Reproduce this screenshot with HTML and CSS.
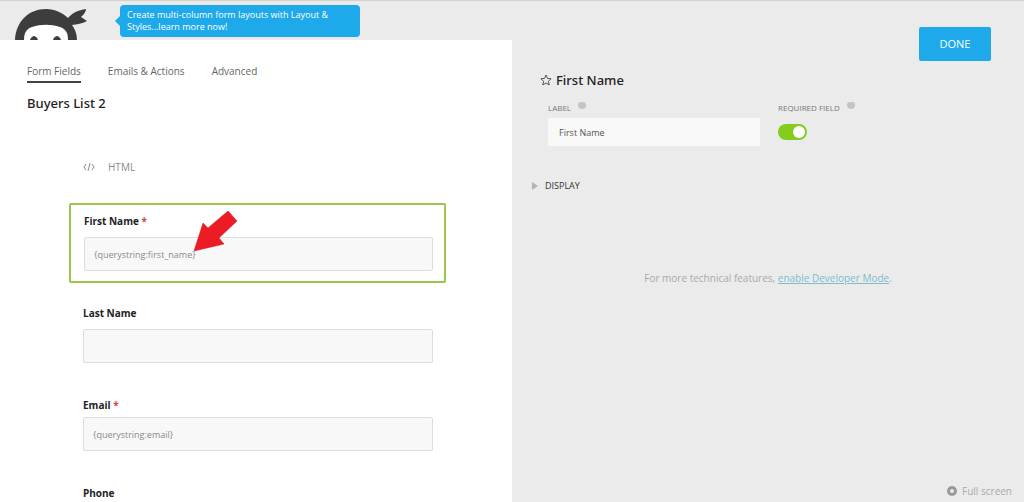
FILE: index.html
```html
<!DOCTYPE html>
<html lang="en">
  <head>
    <meta charset="UTF-8" />
    <meta name="viewport" content="width=device-width, initial-scale=1.0" />
    <title>Buyers List 2</title>
    <link rel="stylesheet" href="styles.css">
  </head>
  <body>
    <div class="app">
      <main class="builder">
        <header class="topbar">
          <svg class="logo" viewBox="0 0 74 34" width="74" height="34" aria-hidden="true">
            <path fill="#3d3d3d" d="M0 34C1 15 14 3 31 3c9 0 17 4 22 9 4-5 10-8 18-9 0 3-2 5-5 8l6 4c-5 3-10 3-15 4 3 4 5 9 5 15z" />
            <path fill="#fff" d="M9 34c0-7 2-11 8-13 9-3 19-3 28 0 6 2 8 6 8 13z" />
            <path fill="#3d3d3d" d="M15 34c1-3 3-4 4-4s3 1 4 4zM38 34c1-3 3-4 4-4s3 1 4 4z" />
          </svg>
          <a class="notice" href="#">Create multi-column form layouts with Layout &amp; Styles...learn more now!</a>
        </header>

        <nav class="tabs">
          <a class="tab active" href="#">Form Fields</a>
          <a class="tab" href="#">Emails &amp; Actions</a>
          <a class="tab" href="#">Advanced</a>
        </nav>
        <h1 class="form-title">Buyers List 2</h1>

        <form class="fields">
          <div class="html-field">
            <svg viewBox="0 0 12 8" width="12" height="8" aria-hidden="true">
              <path d="M3 1L1 4l2 3M9 1l2 3-2 3M7 0L5 8" fill="none" stroke="#8a8a8a" />
            </svg>
            <span>HTML</span>
          </div>
          <div class="field selected">
            <label for="first">First Name <span class="req">*</span></label>
            <input id="first" type="text" value="{querystring:first_name}">
            <svg class="arrow" viewBox="0 0 44 41" width="44" height="41" aria-hidden="true">
              <path fill="#ed1c24" stroke="#c9151c" stroke-width=".5" d="M0 40L9 12l5 5L34 0l9 10-18 17 5 6z" />
            </svg>
          </div>
          <div class="field">
            <label for="last">Last Name</label>
            <input id="last" type="text">
          </div>
          <div class="field compact">
            <label for="email">Email <span class="req">*</span></label>
            <input id="email" type="text" value="{querystring:email}">
          </div>
          <div class="field">
            <label for="phone">Phone</label>
            <input id="phone" type="text">
          </div>
        </form>
      </main>

      <aside class="drawer">
        <div class="drawer-actions">
          <button class="done" type="button">DONE</button>
        </div>
        <h2 class="drawer-title">
          <svg viewBox="0 0 12 12" width="12" height="12" aria-hidden="true">
            <path d="M6 1l1.500 3.400 3.600.4-2.700 2.400.8 3.700L6 9l-3.200 1.900.8-3.700L.9 4.800l3.600-.4z" fill="none" stroke="#555" />
          </svg>
          First Name
        </h2>
        <div class="settings">
          <div class="setting">
            <div class="setting-head">
              <label for="setting-label">LABEL</label>
              <i class="help"></i>
            </div>
            <input class="setting-text" id="setting-label" type="text" value="First Name">
          </div>
          <div class="setting">
            <div class="setting-head">
              <label for="setting-required">REQUIRED FIELD</label>
              <i class="help"></i>
            </div>
            <input class="toggle" id="setting-required" type="checkbox" checked>
          </div>
        </div>
        <button class="section-toggle" type="button">DISPLAY</button>
        <p class="dev-mode">For more technical features, <a href="#">enable Developer Mode</a>.</p>
        <button class="full-screen" type="button"><i class="ring"></i>Full screen</button>
      </aside>
    </div>
  </body>
</html>
```

FILE: styles.css
```css
* {
  box-sizing: border-box;
}

body {
  margin: 0;
  font-family: "Open Sans", "Noto Sans", sans-serif;
  font-size: 10px;
  line-height: 16px;
  color: #222;
  background-color: #ebebeb;
}

input,
button {
  font: inherit;
}

.app {
  display: grid;
  grid-template-columns: 1fr 1fr;
  grid-template-rows: 100%;
  height: 100vh;
  overflow: hidden;
  border-top: 1px solid #d2d2d2;
}

.builder {
  background-color: #fff;
  min-width: 0;
}

.topbar {
  display: flex;
  align-items: flex-start;
  gap: 31px;
  height: 39px;
  padding: 4px 15px 0;
  background-color: #ebebeb;
}

.logo {
  align-self: flex-end;
  flex: none;
}

.notice {
  position: relative;
  width: 240px;
  padding: 4px 24px 4px 7px;
  border-radius: 4px;
  background-color: #1ea9ea;
  color: #fff;
  font-size: 9px;
  line-height: 12px;
  text-decoration: none;
}

.notice::before {
  content: "";
  position: absolute;
  left: -5px;
  top: 11px;
  border: 5px solid transparent;
  border-left: 0;
  border-right-color: #1ea9ea;
}

.tabs {
  display: flex;
  gap: 27px;
  padding: 23px 27px 0;
}

.tab {
  padding-bottom: 2px;
  border-bottom: 2px solid transparent;
  color: #666;
  text-decoration: none;
}

.tab.active {
  border-color: #424242;
}

.form-title,
.drawer-title {
  font-family: "Noto Sans", sans-serif;
  font-size: 13px;
  line-height: 20px;
  font-weight: 500;
}

.form-title {
  margin: 10px 27px 0;
}

.fields {
  padding: 46px 66px 0 69px;
}

.html-field {
  display: flex;
  align-items: center;
  gap: 13px;
  margin-bottom: 28px;
  padding: 0 14px;
  color: #8a8a8a;
}

.field {
  position: relative;
  margin-bottom: 34px;
  padding: 0 13px 0 14px;
}

.field.selected {
  margin-bottom: 22px;
  padding: 8px 11px 10px 13px;
  border: 2px solid #9ac64b;
  border-radius: 2px;
}

.field label {
  display: block;
  margin-bottom: 8px;
  font-weight: 700;
}

.field.compact label {
  margin-bottom: 4px;
}

.req {
  color: #d8434e;
}

.field input {
  display: block;
  width: 100%;
  height: 34px;
  padding: 0 9px;
  border: 1px solid #ddd;
  border-radius: 2px;
  background-color: #f8f8f8;
  color: #8a8a8a;
  font-size: 9px;
}

.arrow {
  position: absolute;
  left: 123px;
  top: 6px;
}

.drawer {
  display: flex;
  flex-direction: column;
  min-width: 0;
  padding: 26px 12px 3px 20px;
}

.drawer-actions {
  display: flex;
  justify-content: flex-end;
  padding-right: 21px;
}

.done {
  width: 72px;
  height: 34px;
  border: 0;
  border-radius: 2px;
  background-color: #1ea9ea;
  color: #fff;
  font-size: 11px;
}

.drawer-title {
  display: flex;
  align-items: center;
  gap: 4px;
  margin: 9px 0 0 8px;
}

.settings {
  display: flex;
  gap: 18px;
  margin-top: 12px;
  padding-left: 16px;
}

.setting-head {
  display: flex;
  align-items: flex-start;
  gap: 7px;
  height: 16px;
  color: #777;
  font-size: 8px;
  line-height: 12px;
}

.help {
  width: 8px;
  height: 7px;
  border-radius: 3px 3px 4px 4px;
  background-color: #c4c4c4;
}

.setting-text {
  display: block;
  width: 212px;
  height: 28px;
  padding: 0 11px;
  border: 0;
  background-color: #f9f9f9;
  color: #555;
  font-size: 9px;
}

.toggle {
  appearance: none;
  display: block;
  width: 29px;
  height: 16px;
  margin: 6px 0 0;
  padding: 2px;
  border-radius: 8px;
  background-color: #84cc1e;
}

.toggle::before {
  content: "";
  display: block;
  width: 12px;
  height: 12px;
  border-radius: 6px;
  background-color: #fff;
}

.toggle:checked::before {
  margin-left: auto;
}

.section-toggle {
  display: flex;
  align-items: center;
  gap: 7px;
  margin-top: 32px;
  padding: 0;
  border: 0;
  background: none;
  color: #333;
  font-size: 9px;
}

.section-toggle::before {
  content: "";
  border: 4px solid transparent;
  border-left: 6px solid #b4b4b4;
  border-right: 0;
}

.dev-mode {
  margin: 76px 8px 0 0;
  color: #aaa;
  text-align: center;
}

.dev-mode a {
  color: #7dbbd0;
}

.full-screen {
  display: flex;
  align-items: center;
  gap: 5px;
  margin: auto 0 0 auto;
  padding: 0;
  border: 0;
  background: none;
  color: #aaa;
}

.ring {
  width: 10px;
  height: 10px;
  border: 3px solid #999;
  border-radius: 5px;
}
```
